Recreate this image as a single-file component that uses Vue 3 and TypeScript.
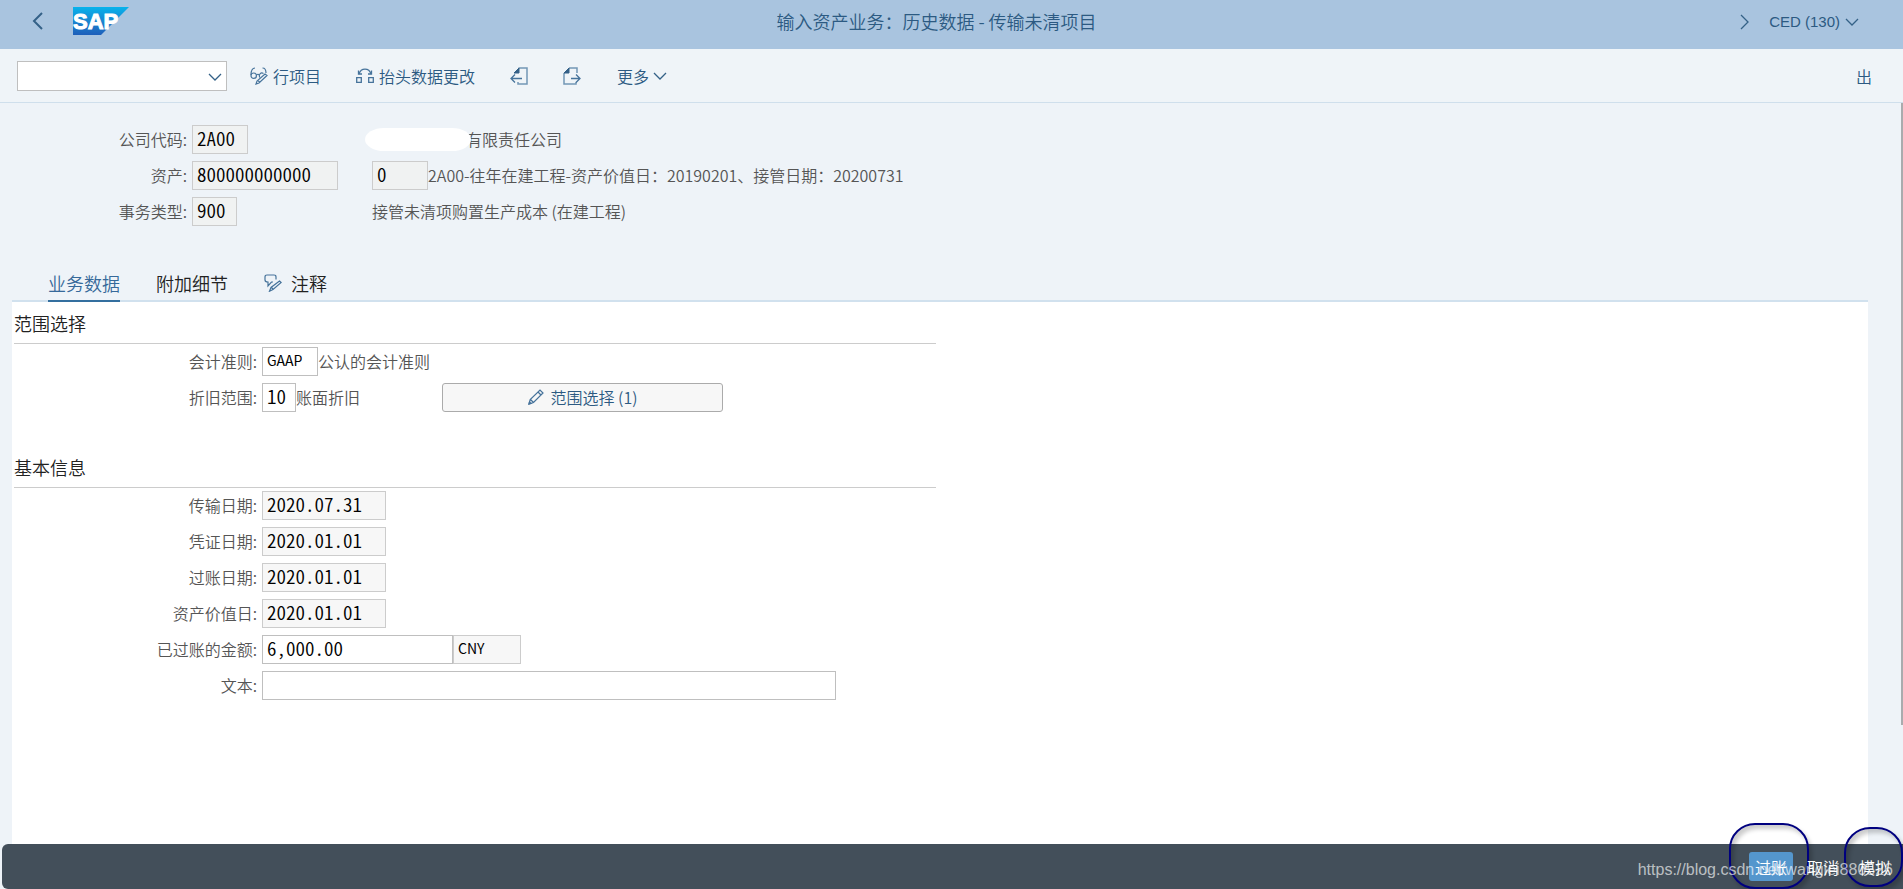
<script setup lang="ts">
import { ref } from 'vue'

interface DateRow {
  id: string
  label: string
  value: string
}

const command = ref('')
const activeTab = ref('data')

const dates = ref<DateRow[]>([
  { id: 'transfer-date', label: '传输日期:', value: '2020.07.31' },
  { id: 'document-date', label: '凭证日期:', value: '2020.01.01' },
  { id: 'posting-date', label: '过账日期:', value: '2020.01.01' },
  { id: 'value-date', label: '资产价值日:', value: '2020.01.01' },
])

const amount = ref('6,000.00')
const note = ref('')
</script>

<template>
  <div class="page">
    <header class="shell">
      <div class="shell-left">
        <button class="plain back" type="button" aria-label="返回">
          <svg width="12" height="18" viewBox="0 0 12 18"><path d="M10 1 2 9l8 8" fill="none" stroke="#346187" stroke-width="2" /></svg>
        </button>
        <svg class="logo" width="56" height="28" viewBox="0 0 56 28" role="img" aria-label="SAP">
          <defs>
            <linearGradient id="logo-fill" x1="0" y1="0" x2="0" y2="1">
              <stop offset="0" stop-color="#06b3ec" />
              <stop offset="0.5" stop-color="#1a86d0" />
              <stop offset="1" stop-color="#1e5fba" />
            </linearGradient>
          </defs>
          <path d="M0 0H56L28 28H0Z" fill="url(#logo-fill)" />
          <text x="0" y="22" class="logo-text">SAP</text>
        </svg>
      </div>
      <h1>输入资产业务：历史数据 - 传输未清项目</h1>
      <div class="shell-right">
        <button class="plain" type="button" aria-label="下一个">
          <svg width="10" height="16" viewBox="0 0 10 16"><path d="m1 1 7 7-7 7" fill="none" stroke="#346187" stroke-width="1.3" /></svg>
        </button>
        <button class="plain system" type="button">
          CED (130)
          <svg class="caret" width="14" height="11" viewBox="0 0 14 11"><path d="m1 3 6 6 6-6" fill="none" stroke="#346187" stroke-width="1.3" /></svg>
        </button>
      </div>
    </header>

    <nav class="toolbar" aria-label="工具栏">
      <div class="command">
        <select v-model="command" aria-label="命令"><option value=""></option></select>
        <svg width="14" height="9" viewBox="0 0 14 9"><path d="m1 1 6 6 6-6" fill="none" stroke="#346187" stroke-width="1.3" /></svg>
      </div>
      <button class="plain tool" type="button">
        <svg width="18" height="18" viewBox="0 0 18 18" fill="none" stroke="#46739b" stroke-width="1.2">
          <path d="M5 1C2 1 1 4 1 8" /><circle cx="3.700" cy="8.700" r="2.700" /><path d="M6.500 8C7.500 7 8.500 7 9.400 8" />
          <path d="M12.500 1c3 0 3.500 2 3.500 5" /><path d="M9.600 10.500C8.500 7 11 5 13.500 6.500" />
          <path d="m15 7 2 1.500-8 7.500-3 1 1-3zM8 13.500l1.500 1.500" />
        </svg>
        行项目
      </button>
      <button class="plain tool tool-header" type="button">
        <svg width="18" height="18" viewBox="0 0 18 18" fill="none" stroke="#46739b" stroke-width="1.3">
          <path d="M.7 10.700h4.600v4.600H.7zM12.700 10.700h4.600v4.600h-4.600zM3 7C5 .5 13 .5 15 7" /><path d="M12 7h3.500V3.500M6 7H2.500V3.500" />
        </svg>
        抬头数据更改
      </button>
      <button class="plain tool tool-prev" type="button" aria-label="上一页">
        <svg width="18" height="18" viewBox="0 0 18 18" fill="none" stroke="#7396b5" stroke-width="1.5">
          <path d="M8.500 1H17v16H8v-2" /><path d="M4 6 9 1v5z" fill="#346187" stroke="#346187" stroke-width="1" /><path d="M12 11.500H1.500M5 7.500l-4 4 4 4" stroke="#46739b" stroke-width="1.3" />
        </svg>
      </button>
      <button class="plain tool tool-next" type="button" aria-label="下一页">
        <svg width="18" height="18" viewBox="0 0 18 18" fill="none" stroke="#7396b5" stroke-width="1.5">
          <path d="M6 1h8v5M1 6v11h12v-2" /><path d="m1 6 5-5v5z" fill="#346187" stroke="#346187" stroke-width="1" /><path d="M8 11.500h9M13 7.500l4 4-4 4" stroke="#46739b" stroke-width="1.3" />
        </svg>
      </button>
      <button class="plain more" type="button">
        更多
        <svg class="caret" width="14" height="11" viewBox="0 0 14 11"><path d="m1 3 6 6 6-6" fill="none" stroke="#346187" stroke-width="1.3" /></svg>
      </button>
      <button class="plain exit" type="button">出</button>
    </nav>

    <main>
      <div class="scroll-thumb"></div>
      <section class="head-form">
        <div class="row">
          <label for="company">公司代码:</label>
          <div class="key"><input id="company" class="w-56 ro" value="2A00" readonly /></div>
          <i class="mask"></i><span class="company-name">有限责任公司</span>
        </div>
        <div class="row">
          <label for="asset">资产:</label>
          <div class="key"><input id="asset" class="w-146 ro" value="800000000000" readonly /></div>
          <input class="w-56 ro" value="0" aria-label="子编号" readonly />
          <span>2A00-往年在建工程-资产价值日：20190201、接管日期：20200731</span>
        </div>
        <div class="row">
          <label for="type">事务类型:</label>
          <div class="key"><input id="type" class="w-45 ro" value="900" readonly /></div>
          <span>接管未清项购置生产成本 (在建工程)</span>
        </div>
      </section>

      <div class="tabs" role="tablist">
        <button type="button" role="tab" :class="{ active: activeTab === 'data' }" :aria-selected="activeTab === 'data'" @click="activeTab = 'data'">业务数据</button>
        <button type="button" role="tab" :class="{ active: activeTab === 'details' }" :aria-selected="activeTab === 'details'" @click="activeTab = 'details'">附加细节</button>
        <button type="button" role="tab" :class="{ active: activeTab === 'notes' }" :aria-selected="activeTab === 'notes'" @click="activeTab = 'notes'">
          <svg width="18" height="18" viewBox="0 0 18 18" fill="none" stroke="#46739b" stroke-width="1.2">
            <path d="M12 5.500V3Q12 1 10 1H3Q1 1 1 3v3q0 2 3 2v4l3.500-4H9" /><path d="m15.500 7 1.700 1.500L9 15.500l-3.500 1.700L7 13.500zM7.500 13.500l1.500 1.500" />
          </svg>
          注释
        </button>
      </div>

      <div class="panel">
        <section class="group">
          <h2>范围选择</h2>
          <div class="row">
            <label for="principle">会计准则:</label>
            <input id="principle" class="w-56 code" value="GAAP" />
            <span>公认的会计准则</span>
          </div>
          <div class="row">
            <label for="area">折旧范围:</label>
            <div class="area"><input id="area" class="w-34" value="10" /><span>账面折旧</span></div>
            <button class="select-area" type="button">
              <svg width="16" height="16" viewBox="0 0 16 16" fill="none" stroke="#46739b" stroke-width="1.2"><path d="m1 15 1.200-4.500L12 1l3 3-9.500 9.500zM10 3l3 3M2.500 10.500l3 3" /><path d="M1 15l.5-2 1.500 1.500z" fill="#346187" /></svg>
              范围选择 (1)
            </button>
          </div>
        </section>

        <section class="group">
          <h2>基本信息</h2>
          <div v-for="d in dates" :key="d.id" class="row">
            <label :for="d.id">{{ d.label }}</label>
            <input :id="d.id" class="w-124 ro" :value="d.value" readonly />
          </div>
          <div class="row">
            <label for="amount">已过账的金额:</label>
            <input id="amount" v-model="amount" class="w-191" />
            <input class="w-68 ro code" value="CNY" aria-label="货币" readonly />
          </div>
          <div class="row">
            <label for="note">文本:</label>
            <input id="note" v-model="note" class="w-574" />
          </div>
        </section>
      </div>
    </main>

    <footer>
      <button class="post ringed" type="button">过账</button>
      <button class="cancel" type="button">取消</button>
      <button class="simulate ringed" type="button">模拟</button>
      <span class="watermark">https://blog.csdn.net/wanglei880526</span>
    </footer>
  </div>
</template>

<style>
body {
  margin: 0;
  overflow: hidden;
}
</style>

<style scoped>
* {
  box-sizing: border-box;
}
.page {
  display: flex;
  flex-direction: column;
  min-height: 100vh;
  background: #eef3f8;
  color: #555;
  font: 350 16px/20px 'Noto Sans CJK SC', sans-serif;
}
button,
input,
select {
  margin: 0;
  font: inherit;
}
button {
  cursor: pointer;
}
svg {
  display: block;
  flex: none;
}
.plain {
  display: flex;
  align-items: center;
  padding: 0;
  border: 0;
  background: none;
  color: #2c5a82;
}

.shell {
  display: grid;
  grid-template-columns: 1fr auto 1fr;
  align-items: center;
  height: 49px;
  padding: 0 44px 0 14px;
  background: #a9c4df;
  color: #2c5a82;
}
.shell-left,
.shell-right {
  display: flex;
  align-items: center;
}
.shell-left {
  gap: 29px;
  padding: 0 0 8px 18px;
}
.shell-right {
  justify-content: flex-end;
  gap: 19px;
  padding-bottom: 6px;
}
.logo-text {
  fill: #fff;
  stroke: #fff;
  stroke-width: 1px;
  font: 700 22px 'Liberation Sans', sans-serif;
}
.shell h1 {
  margin: 0;
  padding-bottom: 8px;
  font-size: 18px;
  font-weight: 350;
  line-height: 24px;
}
.system {
  gap: 5px;
  font: 15px/20px 'Liberation Sans', sans-serif;
}

.toolbar {
  display: flex;
  align-items: center;
  height: 54px;
  padding: 0 31px 0 17px;
  border-bottom: 1px solid #cfdfec;
  background: #eff4f8;
}
.command {
  position: relative;
}
.command select {
  display: block;
  width: 210px;
  height: 30px;
  border: 1px solid #bfbfbf;
  border-radius: 0;
  appearance: none;
  background: #fff;
}
.command svg {
  position: absolute;
  right: 5px;
  top: 12px;
  pointer-events: none;
}
.tool {
  gap: 5px;
  margin-left: 23px;
}
.tool-header,
.tool-prev,
.tool-next {
  margin-left: 35px;
}
.more {
  gap: 4px;
  margin-left: 36px;
}
.exit {
  margin-left: auto;
}

main {
  position: relative;
  display: flex;
  flex: 1;
  flex-direction: column;
}
.scroll-thumb {
  position: absolute;
  right: 0;
  top: 0;
  width: 2px;
  height: 84%;
  background: #a9abad;
}
.head-form {
  display: flex;
  flex-direction: column;
  gap: 7px;
  padding-top: 22px;
}
.row {
  display: flex;
  align-items: center;
  height: 29px;
}
.row label,
.row span {
  padding-bottom: 2px;
}
.row label {
  flex: none;
  padding-right: 5px;
  text-align: right;
}
.head-form label {
  width: 192px;
}
.key {
  display: flex;
  flex: none;
  width: 180px;
}
.row input {
  flex: none;
  height: 29px;
  padding: 0 4px 5px;
  border: 1px solid #bfbfbf;
  border-radius: 0;
  background: #fff;
  color: #000;
  font-size: 19px;
  font-feature-settings: 'hwid';
}
.row .ro {
  border-color: #ccc;
  background: #f7f7f7;
}
.head-form .row .ro {
  background: #f0f2f2;
}
.row .code {
  padding-bottom: 3px;
  font-size: 14px;
  font-weight: 400;
  font-feature-settings: normal;
}
.w-34 { width: 34px; }
.w-45 { width: 45px; }
.w-56 { width: 56px; }
.w-68 { width: 68px; }
.w-124 { width: 124px; }
.w-146 { width: 146px; }
.w-191 { width: 191px; }
.w-574 { width: 574px; }
.mask {
  z-index: 1;
  width: 106px;
  height: 23px;
  margin-left: -7px;
  border-radius: 20px / 12px;
  background: #fff;
}
.company-name {
  margin-left: -5px;
}

.tabs {
  display: flex;
  gap: 36px;
  margin: 46px 35px 0 12px;
  padding-left: 36px;
  border-bottom: 2px solid #d1e1ee;
}
.tabs button {
  display: flex;
  align-items: center;
  gap: 9px;
  height: 30px;
  margin-bottom: -2px;
  padding: 0 0 6px;
  border: 0;
  border-bottom: 2px solid transparent;
  background: none;
  color: #222;
  font-size: 18px;
  line-height: 24px;
}
.tabs .active {
  border-color: #346f9f;
  color: #36699a;
}
.panel {
  display: flex;
  flex: 1;
  flex-direction: column;
  gap: 39px;
  margin: 0 35px 0 12px;
  padding: 5px 2px;
  background: #fff;
}
.group {
  display: flex;
  flex-direction: column;
  gap: 7px;
}
.group h2 {
  width: calc(50% - 4px);
  height: 37px;
  margin: 0 0 -4px;
  border-bottom: 1px solid #ccc;
  color: #222;
  font-size: 18px;
  font-weight: 350;
  line-height: 32px;
}
.group label {
  width: 248px;
}
.area {
  display: flex;
  align-items: center;
  width: 180px;
}
.select-area {
  display: flex;
  align-items: center;
  justify-content: center;
  gap: 7px;
  width: 281px;
  height: 29px;
  padding: 0 0 2px;
  border: 1px solid #ababab;
  border-radius: 3px;
  background: #f7f7f7;
  color: #2c5a82;
}

footer {
  position: relative;
  display: flex;
  align-items: center;
  justify-content: flex-end;
  height: 45px;
  margin-left: 2px;
  padding: 0 6px;
  border-radius: 6px 0 0 6px;
  background: #434f5a;
}
footer button {
  position: relative;
  height: 29px;
  padding: 0 6px;
  border: 0;
  border-radius: 3px;
  background: none;
  color: #fff;
}
footer .post {
  background: #5496cd;
}
.cancel {
  margin: 0 8px;
}
.ringed::after {
  position: absolute;
  border: 2px solid #00007f;
  border-radius: 26px;
  box-shadow: 3px 4px 4px rgb(0 0 0 / 20%), inset 3px 4px 4px rgb(0 0 0 / 20%);
  content: '';
}
.post::after {
  inset: -29px -16px -8px -20px;
}
.simulate::after {
  inset: -25px -6px -6px -9px;
}
.watermark {
  position: absolute;
  right: 10px;
  bottom: 9px;
  color: rgb(255 255 255 / 65%);
  font: 16px/20px 'Liberation Sans', sans-serif;
  pointer-events: none;
}
</style>
